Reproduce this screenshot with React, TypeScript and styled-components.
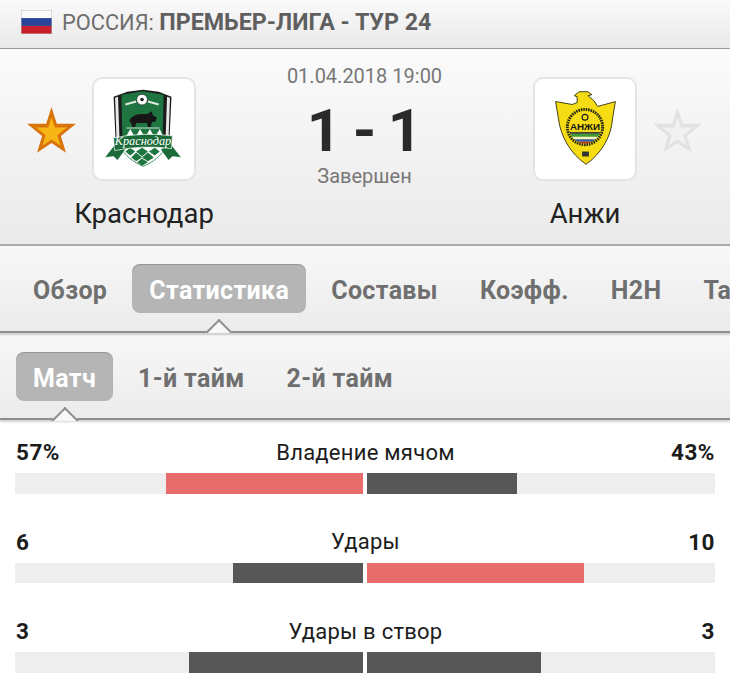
import styled, { createGlobalStyle } from 'styled-components'

const GlobalStyle = createGlobalStyle`
    html, body {
        margin: 0;
        padding: 0;
        background: #fff;
    }
    body {
        font-family: Roboto, "Liberation Sans", sans-serif;
        overflow: hidden;
    }
`

const Page = styled.div`
    width: 730px;
    height: 696px;
    overflow: hidden;
`

const LeagueBar = styled.div`
    height: 49px;
    display: flex;
    align-items: center;
    gap: 10px;
    padding: 0 0 4px 21px;
    box-sizing: border-box;
    background: linear-gradient(#fafafa, #e9e9e9);
    border-bottom: 1px solid #9b9b9b;
    font-size: 21.8px;
    color: #6e6e6e;
    white-space: nowrap;

    strong {
        font-size: 23.25px;
        font-weight: 700;
        color: #5f5f5f;
    }
`

const MatchPanel = styled.div`
    height: 197px;
    box-sizing: border-box;
    display: flex;
    padding: 28px 28px 0 27px;
    background: linear-gradient(#fbfbfb, #eaeaea);
    border-bottom: 2px solid #a9a9a9;
`

const FavStar = styled.div`
    width: 49px;
    height: 103px;
    display: flex;
    align-items: center;
    justify-content: center;
`

const Team = styled.div<{ $side: 'left' | 'right' }>`
    width: 104px;
    display: flex;
    flex-direction: column;
    align-items: center;
    margin: ${({ $side }) => ($side === 'left' ? '0 0 0 16px' : '0 16px 0 0')};
`

const Crest = styled.div`
    width: 104px;
    height: 104px;
    box-sizing: border-box;
    border: 2px solid #e4e4e4;
    border-radius: 10px;
    background: #fff;
    overflow: hidden;
`

const TeamName = styled.div`
    margin-top: 16px;
    font-size: 27.5px;
    line-height: 34px;
    color: #222;
    white-space: nowrap;
`

const Center = styled.div`
    flex: 1;
    display: flex;
    flex-direction: column;
    align-items: center;
    margin-top: -13px;
`

const DateText = styled.div`
    font-size: 20px;
    line-height: 24px;
    color: #777;
`

const Score = styled.div`
    font-size: 60px;
    line-height: 70px;
    font-weight: 700;
    word-spacing: -3.5px;
    color: #2a2a2a;
    margin-top: 8px;
`

const Status = styled.div`
    font-size: 20px;
    line-height: 24px;
    color: #777;
    margin-top: -2px;
`

const TabBar = styled.div<{ $level: number }>`
    height: 87px;
    box-sizing: border-box;
    display: flex;
    gap: 8px;
    padding: ${({ $level }) => ($level === 2 ? '18px 0 0 16px' : '19px 0 0 16px')};
    background: linear-gradient(#f8f8f8, #ebebeb);
    border-bottom: 2px solid #8e8e8e;
    box-shadow: 0 2px 2px rgba(0, 0, 0, 0.18);
    position: relative;
    z-index: ${({ $level }) => $level};
    white-space: nowrap;
`

const Tab = styled.div<{ $active?: boolean }>`
    position: relative;
    height: 49px;
    line-height: 53px;
    padding: 0 17px;
    border-radius: 8px;
    font-size: 25px;
    letter-spacing: 0.35px;
    font-weight: 700;
    color: ${({ $active }) => ($active ? '#fff' : '#6f6f6f')};
    background: ${({ $active }) => ($active ? '#b5b5b5' : 'transparent')};
    box-shadow: ${({ $active }) => ($active ? 'inset 0 1px 1px rgba(0, 0, 0, 0.18)' : 'none')};
`

// only the upper half of a turned square shows: the peak over the bar's bottom line
const Notch = styled.span`
    position: absolute;
    left: 50%;
    top: calc(100% + 6px);
    width: 28px;
    height: 14px;
    margin-left: -14px;
    overflow: hidden;

    &::before {
        content: '';
        position: absolute;
        left: 4px;
        top: 4px;
        width: 20px;
        height: 20px;
        box-sizing: border-box;
        background: #f8f8f8;
        border-top: 2px solid #8e8e8e;
        border-left: 2px solid #8e8e8e;
        transform: rotate(45deg);
    }
`

const Stats = styled.div`
    padding: 19px 15px 0;
    display: flex;
    flex-direction: column;
    gap: 35px;
    background: #fff;
`

const StatRow = styled.div`
    display: flex;
    flex-direction: column;
    gap: 8px;
`

const StatHead = styled.div`
    display: flex;
    justify-content: space-between;
    align-items: center;
    height: 26px;
    padding: 0 0 0 1px;
    color: #1c1c1c;
    font-size: 22px;
    letter-spacing: 0.25px;
`

const StatValue = styled.span`
    font-weight: 700;
    font-size: 22.5px;
    letter-spacing: 0.5px;
    width: 60px;
    &:last-child {
        text-align: right;
    }
`

const Bars = styled.div`
    display: flex;
    gap: 4px;
`

const BarSide = styled.div<{ $right?: boolean }>`
    flex: 1;
    height: 20.5px;
    display: flex;
    justify-content: ${({ $right }) => ($right ? 'flex-start' : 'flex-end')};
    background: #eeeeee;
`

const BarFill = styled.div<{ $win: boolean }>`
    height: 100%;
    background: ${({ $win }) => ($win ? '#e76c6b' : '#575757')};
`

const Flag = () => (
    <svg width="31" height="24" viewBox="0 0 31 25" preserveAspectRatio="none" style={{ flexShrink: 0 }}>
        <rect width="31" height="8.4" fill="#fbfbfb" />
        <rect y="8.4" width="31" height="8.2" fill="#27449a" />
        <rect y="16.6" width="31" height="8.4" fill="#c5202c" />
        <rect x="0.25" y="0.25" width="30.5" height="24.5" fill="none" stroke="#bbb" strokeWidth="0.5" />
    </svg>
)

const STAR = 'M24.5 2 L29.8 18.7 L49 18.7 L33.9 31 L39 47.7 L24.5 37.9 L10 47.7 L15.1 31 L0 18.7 L19.2 18.7 Z'

const Star = ({ on }: { on: boolean }) => (
    <svg width="49" height="48" viewBox="0 0 49 48">
        <path d={STAR} fill={on ? '#d8740b' : '#e2e2e2'} />
        <path
            d={STAR}
            fill={on ? '#f8b616' : '#f1f1f1'}
            transform="translate(24.5 29) scale(0.62) translate(-24.5 -29)"
        />
    </svg>
)

const KrasnodarLogo = () => (
    <svg width="100" height="100" viewBox="4 4 102 102">
        {/* shield */}
        <path d="M24 22 L38 17 L54 15 L70 17 L83 22 L81 66 L26 66 Z" fill="#1b1b1b" />
        <path d="M25.5 23 L28.5 22 L30 66 L27 66 Z" fill="#e9e9e9" />
        <path d="M81.5 23 L78.5 22 L77 66 L80 66 Z" fill="#e9e9e9" />
        <path d="M32 20 L54 16.5 L75 20 L74 66 L33 66 Z" fill="#1e7540" />
        <circle cx="53" cy="25" r="5.5" fill="#fff" stroke="#222" strokeWidth="0.7" />
        <circle cx="53" cy="25" r="1.8" fill="#222" />
        <path d="M36 30 L47 27 M70 30 L59 27" stroke="#dfe8e0" strokeWidth="2" />
        {/* bull */}
        <path d="M40 47 C42 40 52 39 58 40 L63 37 L64 41 L68 43 L67 47 L63 48 L62 53 L59 53 L58 49 L47 49 L46 53 L43 53 L42 49 Z" fill="#161616" />
        {/* checks above the ribbon */}
        <path d="M37 54 H71" stroke="#fff" strokeWidth="0.8" />
        <path d="M36 64 L41 55 L46 64 L51 55 L56 64 L61 55 L66 64 L71 55 L75 64 Z" fill="#fff" />
        {/* lower shield */}
        <path d="M29 72 C36 82 44 89 54 93 C65 89 72 82 79 72 Z" fill="#fff" stroke="#1e7540" strokeWidth="0.8" />
        <path d="M36 78 L41 74 L46 78 L41 82 Z M47 78 L53 74 L59 78 L53 83 Z M60 78 L66 74 L71 78 L66 82 Z M42 84 L47 79 L53 84 L47 88 Z M53 84 L59 79 L65 84 L59 88 Z M48 89 L53 85 L59 89 L53 92.5 Z" fill="#1e7540" />
        {/* ribbon */}
        <path d="M26 70 L15 84 L24 83 L28 87 L36 76 Z M82 70 L93 84 L84 83 L80 87 L72 76 Z" fill="#1a6b38" stroke="#fff" strokeWidth="0.5" />
        <path d="M24 64 Q54 58 84 62 L83 75 Q54 71 25 77 Z" fill="#1a6b38" stroke="#fff" strokeWidth="0.7" />
        <text x="54" y="71.5" textAnchor="middle" fontFamily="Liberation Serif, serif" fontStyle="italic" fontSize="12.5" fill="#fff">Краснодар</text>
    </svg>
)

const AnjiLogo = () => (
    <svg width="100" height="100" viewBox="4 4 102 102">
        <path d="M25 27 L42 30 L47 28 L47 22 L44 21 L49 17 L58 17 L62 20 L58 21 L64 26 L68 32 L86 27 L83 45 C82 62 72 80 56 91 C40 80 30 62 28 45 Z" fill="#f6dc12" stroke="#2a2a10" strokeWidth="0.9" strokeLinejoin="round" />
        <circle cx="55" cy="53" r="18" fill="none" stroke="#262610" strokeWidth="3" strokeDasharray="1.6 0.9" />
        <circle cx="55" cy="43" r="3" fill="#f6dc12" stroke="#222" strokeWidth="1.2" />
        <clipPath id="anji-ring">
            <circle cx="55" cy="53" r="16.5" />
        </clipPath>
        <g clipPath="url(#anji-ring)">
            <rect x="38" y="58" width="34" height="2" fill="#444" />
            <rect x="38" y="60" width="34" height="3" fill="#3f9a3a" />
            <rect x="38" y="63" width="34" height="2.5" fill="#f4f0c8" />
            <rect x="38" y="65.5" width="34" height="2.5" fill="#2b5fb0" />
            <rect x="38" y="68" width="34" height="3" fill="#c92a2a" />
        </g>
        <text x="55" y="56.5" textAnchor="middle" fontFamily="Liberation Sans, sans-serif" fontWeight="700" fontSize="10" fill="#111">АНЖИ</text>
        <rect x="52" y="78" width="7" height="5" fill="#333" />
    </svg>
)

const tabs = ['Обзор', 'Статистика', 'Составы', 'Коэфф.', 'H2H', 'Таблица']
const subTabs = ['Матч', '1-й тайм', '2-й тайм']

const stats = [
    { title: 'Владение мячом', home: '57%', away: '43%', homeShare: 56.7, awayShare: 43, winner: 'home' },
    { title: 'Удары', home: '6', away: '10', homeShare: 37.5, awayShare: 62.3, winner: 'away' },
    { title: 'Удары в створ', home: '3', away: '3', homeShare: 50, awayShare: 50, winner: 'none' },
]

export default function App() {
    return (
        <Page>
            <GlobalStyle />
            <LeagueBar>
                <Flag />
                <span>
                    РОССИЯ: <strong>ПРЕМЬЕР-ЛИГА - ТУР 24</strong>
                </span>
            </LeagueBar>
            <MatchPanel>
                <FavStar>
                    <Star on />
                </FavStar>
                <Team $side="left">
                    <Crest>
                        <KrasnodarLogo />
                    </Crest>
                    <TeamName>Краснодар</TeamName>
                </Team>
                <Center>
                    <DateText>01.04.2018 19:00</DateText>
                    <Score>1 - 1</Score>
                    <Status>Завершен</Status>
                </Center>
                <Team $side="right">
                    <Crest>
                        <AnjiLogo />
                    </Crest>
                    <TeamName>Анжи</TeamName>
                </Team>
                <FavStar>
                    <Star on={false} />
                </FavStar>
            </MatchPanel>
            <TabBar $level={2}>
                {tabs.map((t) => (
                    <Tab key={t} $active={t === 'Статистика'}>
                        {t}
                        {t === 'Статистика' && <Notch />}
                    </Tab>
                ))}
            </TabBar>
            <TabBar $level={1}>
                {subTabs.map((t) => (
                    <Tab key={t} $active={t === 'Матч'}>
                        {t}
                        {t === 'Матч' && <Notch />}
                    </Tab>
                ))}
            </TabBar>
            <Stats>
                {stats.map((s) => (
                    <StatRow key={s.title}>
                        <StatHead>
                            <StatValue>{s.home}</StatValue>
                            <span>{s.title}</span>
                            <StatValue>{s.away}</StatValue>
                        </StatHead>
                        <Bars>
                            <BarSide>
                                <BarFill $win={s.winner === 'home'} style={{ width: `${s.homeShare}%` }} />
                            </BarSide>
                            <BarSide $right>
                                <BarFill $win={s.winner === 'away'} style={{ width: `${s.awayShare}%` }} />
                            </BarSide>
                        </Bars>
                    </StatRow>
                ))}
            </Stats>
        </Page>
    )
}
